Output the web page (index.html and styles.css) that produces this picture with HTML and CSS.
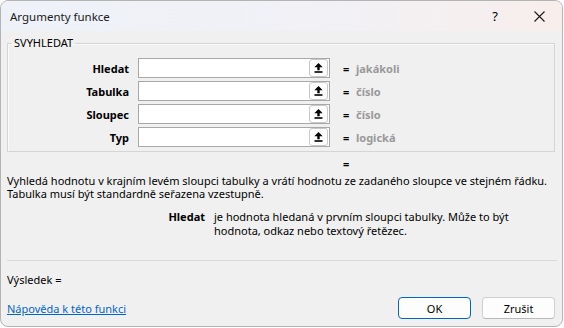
FILE: index.html
```html
<!DOCTYPE html>
<html lang="cs">
<head>
    <meta charset="UTF-8">
    <meta name="viewport" content="width=device-width, initial-scale=1.0">
    <title>Argumenty funkce</title>
    <link rel="stylesheet" href="styles.css">
</head>
<body>
    <div class="window">
        <div class="titlebar">
            <span class="title">Argumenty funkce</span>
            <span class="help">?</span>
            <span class="close">
                <svg width="11" height="11" viewBox="0 0 11 11"><path d="M0.5 0.5 L10.5 10.5 M10.5 0.5 L0.5 10.5" stroke="#1a1a1a" stroke-width="1.1" fill="none"/></svg>
            </span>
        </div>

        <div class="content">
            <fieldset class="args">
                <legend>SVYHLEDAT</legend>

                <div class="arg-row">
                    <label>Hledat</label>
                    <div class="field">
                        <span class="field-input"></span>
                        <span class="ref-btn"><svg width="9" height="10" viewBox="0 0 9 10"><path d="M4.5 0 L8.7 4.2 L5.7 4.2 L5.7 7.2 L3.3 7.2 L3.3 4.2 L0.3 4.2 Z" fill="#000"/><rect x="0.5" y="8.2" width="8" height="1.6" fill="#000"/></svg></span>
                    </div>
                    <div class="arg-value"><span class="eq">=</span><span class="val">jakákoli</span></div>
                </div>

                <div class="arg-row">
                    <label>Tabulka</label>
                    <div class="field">
                        <span class="field-input"></span>
                        <span class="ref-btn"><svg width="9" height="10" viewBox="0 0 9 10"><path d="M4.5 0 L8.7 4.2 L5.7 4.2 L5.7 7.2 L3.3 7.2 L3.3 4.2 L0.3 4.2 Z" fill="#000"/><rect x="0.5" y="8.2" width="8" height="1.6" fill="#000"/></svg></span>
                    </div>
                    <div class="arg-value"><span class="eq">=</span><span class="val">číslo</span></div>
                </div>

                <div class="arg-row">
                    <label>Sloupec</label>
                    <div class="field">
                        <span class="field-input"></span>
                        <span class="ref-btn"><svg width="9" height="10" viewBox="0 0 9 10"><path d="M4.5 0 L8.7 4.2 L5.7 4.2 L5.7 7.2 L3.3 7.2 L3.3 4.2 L0.3 4.2 Z" fill="#000"/><rect x="0.5" y="8.2" width="8" height="1.6" fill="#000"/></svg></span>
                    </div>
                    <div class="arg-value"><span class="eq">=</span><span class="val">číslo</span></div>
                </div>

                <div class="arg-row">
                    <label>Typ</label>
                    <div class="field">
                        <span class="field-input"></span>
                        <span class="ref-btn"><svg width="9" height="10" viewBox="0 0 9 10"><path d="M4.5 0 L8.7 4.2 L5.7 4.2 L5.7 7.2 L3.3 7.2 L3.3 4.2 L0.3 4.2 Z" fill="#000"/><rect x="0.5" y="8.2" width="8" height="1.6" fill="#000"/></svg></span>
                    </div>
                    <div class="arg-value"><span class="eq">=</span><span class="val">logická</span></div>
                </div>
            </fieldset>

            <div class="formula-result">=</div>

            <p class="desc">Vyhledá hodnotu v krajním levém sloupci tabulky a vrátí hodnotu ze zadaného sloupce ve stejném řádku.<br>Tabulka musí být standardně seřazena vzestupně.</p>

            <div class="arg-help">
                <b>Hledat</b>
                <span>je hodnota hledaná v prvním sloupci tabulky. Může to být hodnota, odkaz nebo textový řetězec.</span>
            </div>

            <div class="separator"></div>

            <div class="result">Výsledek =</div>

            <div class="footer">
                <a href="#" class="help-link">Nápověda k této funkci</a>
                <div class="buttons">
                    <button class="btn primary">OK</button>
                    <button class="btn">Zrušit</button>
                </div>
            </div>
        </div>
    </div>
</body>
</html>
```

FILE: styles.css
```css
:root {
    --ui-font: "Noto Sans", "Open Sans", sans-serif;
    --face: #f0f0f0;
    --field-border: #a8a8a8;
}

body {
    margin: 0;
    background: #ffffff;
    font-family: var(--ui-font);
    font-size: 11px;
    color: #000;
}

.window {
    width: 563px;
    height: 327px;
    box-sizing: border-box;
    border: 1px solid #b4b4b4;
    border-radius: 8px;
    background: var(--face);
    overflow: hidden;
}

.titlebar {
    height: 30px;
    display: flex;
    align-items: center;
    background: linear-gradient(90deg, #eef2f8 0%, #f1f1f6 55%, #f8eeec 100%);
}

.title {
    flex: 1;
    padding-left: 9px;
    font-size: 11.5px;
    color: #1a1a1a;
}

.help {
    font-size: 13px;
    width: 46px;
    text-align: center;
    margin-right: -2px;
}

.close {
    width: 46px;
    display: flex;
    justify-content: center;
    margin-right: 0;
}

.content {
    padding: 5px 7px 0 6px;
}

/* argument group */
.args {
    margin: 0;
    padding: 8px 0 4px 0;
    border: 1px solid #d5d5d5;
    box-shadow: inset 1px 1px 0 #fafafa;
    min-width: 0;
}

.args legend {
    margin-left: 4px;
    padding: 0 2px;
    line-height: 14px;
    font-size: 11px;
}

.arg-row {
    display: grid;
    grid-template-columns: 121px 192px auto;
    column-gap: 9px;
    align-items: center;
    height: 20px;
}

.arg-row + .arg-row {
    margin-top: 3px;
}

.arg-row label {
    text-align: right;
    font-weight: bold;
}

.field {
    height: 20px;
    box-sizing: border-box;
    border: 1px solid var(--field-border);
    background: #fff;
    display: flex;
    align-items: center;
}

.field-input {
    flex: 1;
}

.ref-btn {
    width: 19px;
    height: 18px;
    box-sizing: border-box;
    border: 1px solid #c9c9c9;
    border-radius: 3px;
    display: flex;
    align-items: center;
    justify-content: center;
    margin-right: 1px;
}

.arg-value {
    display: flex;
    font-weight: bold;
}

.eq {
    margin-left: 4px;
    width: 13px;
}

.val {
    color: #999999;
}

/* description area */
.formula-result {
    margin-top: 5px;
    margin-left: 336px;
    line-height: 13px;
    font-weight: bold;
}

.desc {
    margin: 4px 0 0;
    line-height: 13px;
}

.arg-help {
    display: flex;
    gap: 9px;
    margin-top: 10px;
    line-height: 14px;
}

.arg-help b {
    width: 198px;
    text-align: right;
    flex-shrink: 0;
}

.arg-help span {
    width: 320px;
}

.separator {
    margin: 22px -2px 0 0;
    border-top: 1px solid #d9d9d9;
}

.result {
    margin-top: 12px;
    line-height: 14px;
}

.footer {
    margin-top: 10px;
    display: flex;
    align-items: center;
    justify-content: space-between;
}

.help-link {
    color: #0066cc;
    text-decoration: underline;
}

.buttons {
    display: flex;
    gap: 11px;
}

.btn {
    width: 73px;
    height: 22px;
    font-family: var(--ui-font);
    font-size: 11px;
    background: #fdfdfd;
    border: 1px solid #d0d0d0;
    border-bottom-color: #b9b9b9;
    border-radius: 4px;
    padding: 0;
    color: #000;
}

.btn.primary {
    border-color: #0067c0;
}
```
